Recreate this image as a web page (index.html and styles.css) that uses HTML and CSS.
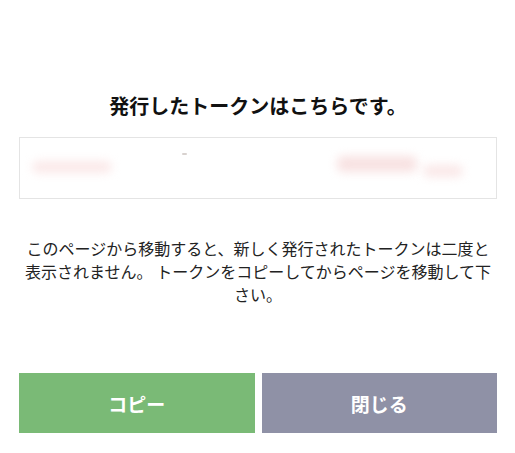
FILE: index.html
```html
<!DOCTYPE html>
<html>
  <head>
    <title>トークン発行</title>
    <link rel="stylesheet" href="styles.css">
  </head>
  <body>
    <div class="token-dialog">
      <h2>発行したトークンはこちらです。</h2>
      <div class="token-box">
        <span class="smudge smudge-left"></span>
        <span class="smudge smudge-mid"></span>
        <span class="smudge smudge-right"></span>
        <span class="smudge smudge-tail"></span>
      </div>
      <p class="notice">このページから移動すると、新しく発行されたトークンは二度と表示されません。 トークンをコピーしてからページを移動して下さい。</p>
      <div class="button-row">
        <button type="button" class="copy-button">コピー</button>
        <button type="button" class="close-button">閉じる</button>
      </div>
    </div>
  </body>
</html>
```

FILE: styles.css
```css
body {
  font-family: "Noto Sans CJK JP", "Noto Sans", sans-serif;
  background: #fff;
  margin: 0;
  padding: 0;
}

.token-dialog {
  padding: 0 18px 0 19px;
}

.token-dialog h2 {
  margin: 92px 0 0;
  font-size: 20px;
  line-height: 28px;
  font-weight: bold;
  text-align: center;
  color: #111;
}

.token-box {
  margin-top: 17px;
  height: 60px;
  border: 1px solid #e4e4e4;
  display: flex;
  align-items: center;
  padding: 0 12px;
  gap: 20px;
  overflow: hidden;
}

.smudge {
  display: inline-block;
  height: 12px;
  border-radius: 6px;
  background: #fbe9e9;
  filter: blur(5px);
}

.smudge-left {
  width: 80px;
  margin-top: -2px;
}

.smudge-mid {
  width: 5px;
  height: 2px;
  background: #d8d2cf;
  filter: blur(0.5px);
  margin-left: 50px;
  margin-top: -28px;
}

.smudge-right {
  width: 80px;
  height: 16px;
  margin-left: 130px;
  margin-top: -8px;
  background: #f8e2e2;
}

.smudge-tail {
  width: 40px;
  margin-left: -14px;
  margin-top: 6px;
  background: #fae8e8;
}

.notice {
  margin: 38px 0 0;
  font-size: 16px;
  line-height: 23px;
  text-align: center;
  color: #222;
}

.button-row {
  margin-top: 67px;
  display: flex;
  gap: 7px;
}

.button-row button {
  flex: 1;
  height: 60px;
  border: none;
  color: #fff;
  font-family: inherit;
  font-size: 19px;
  font-weight: bold;
  cursor: pointer;
}

.copy-button {
  background-color: #7aba76;
}

.close-button {
  background-color: #8f91a6;
}
```
